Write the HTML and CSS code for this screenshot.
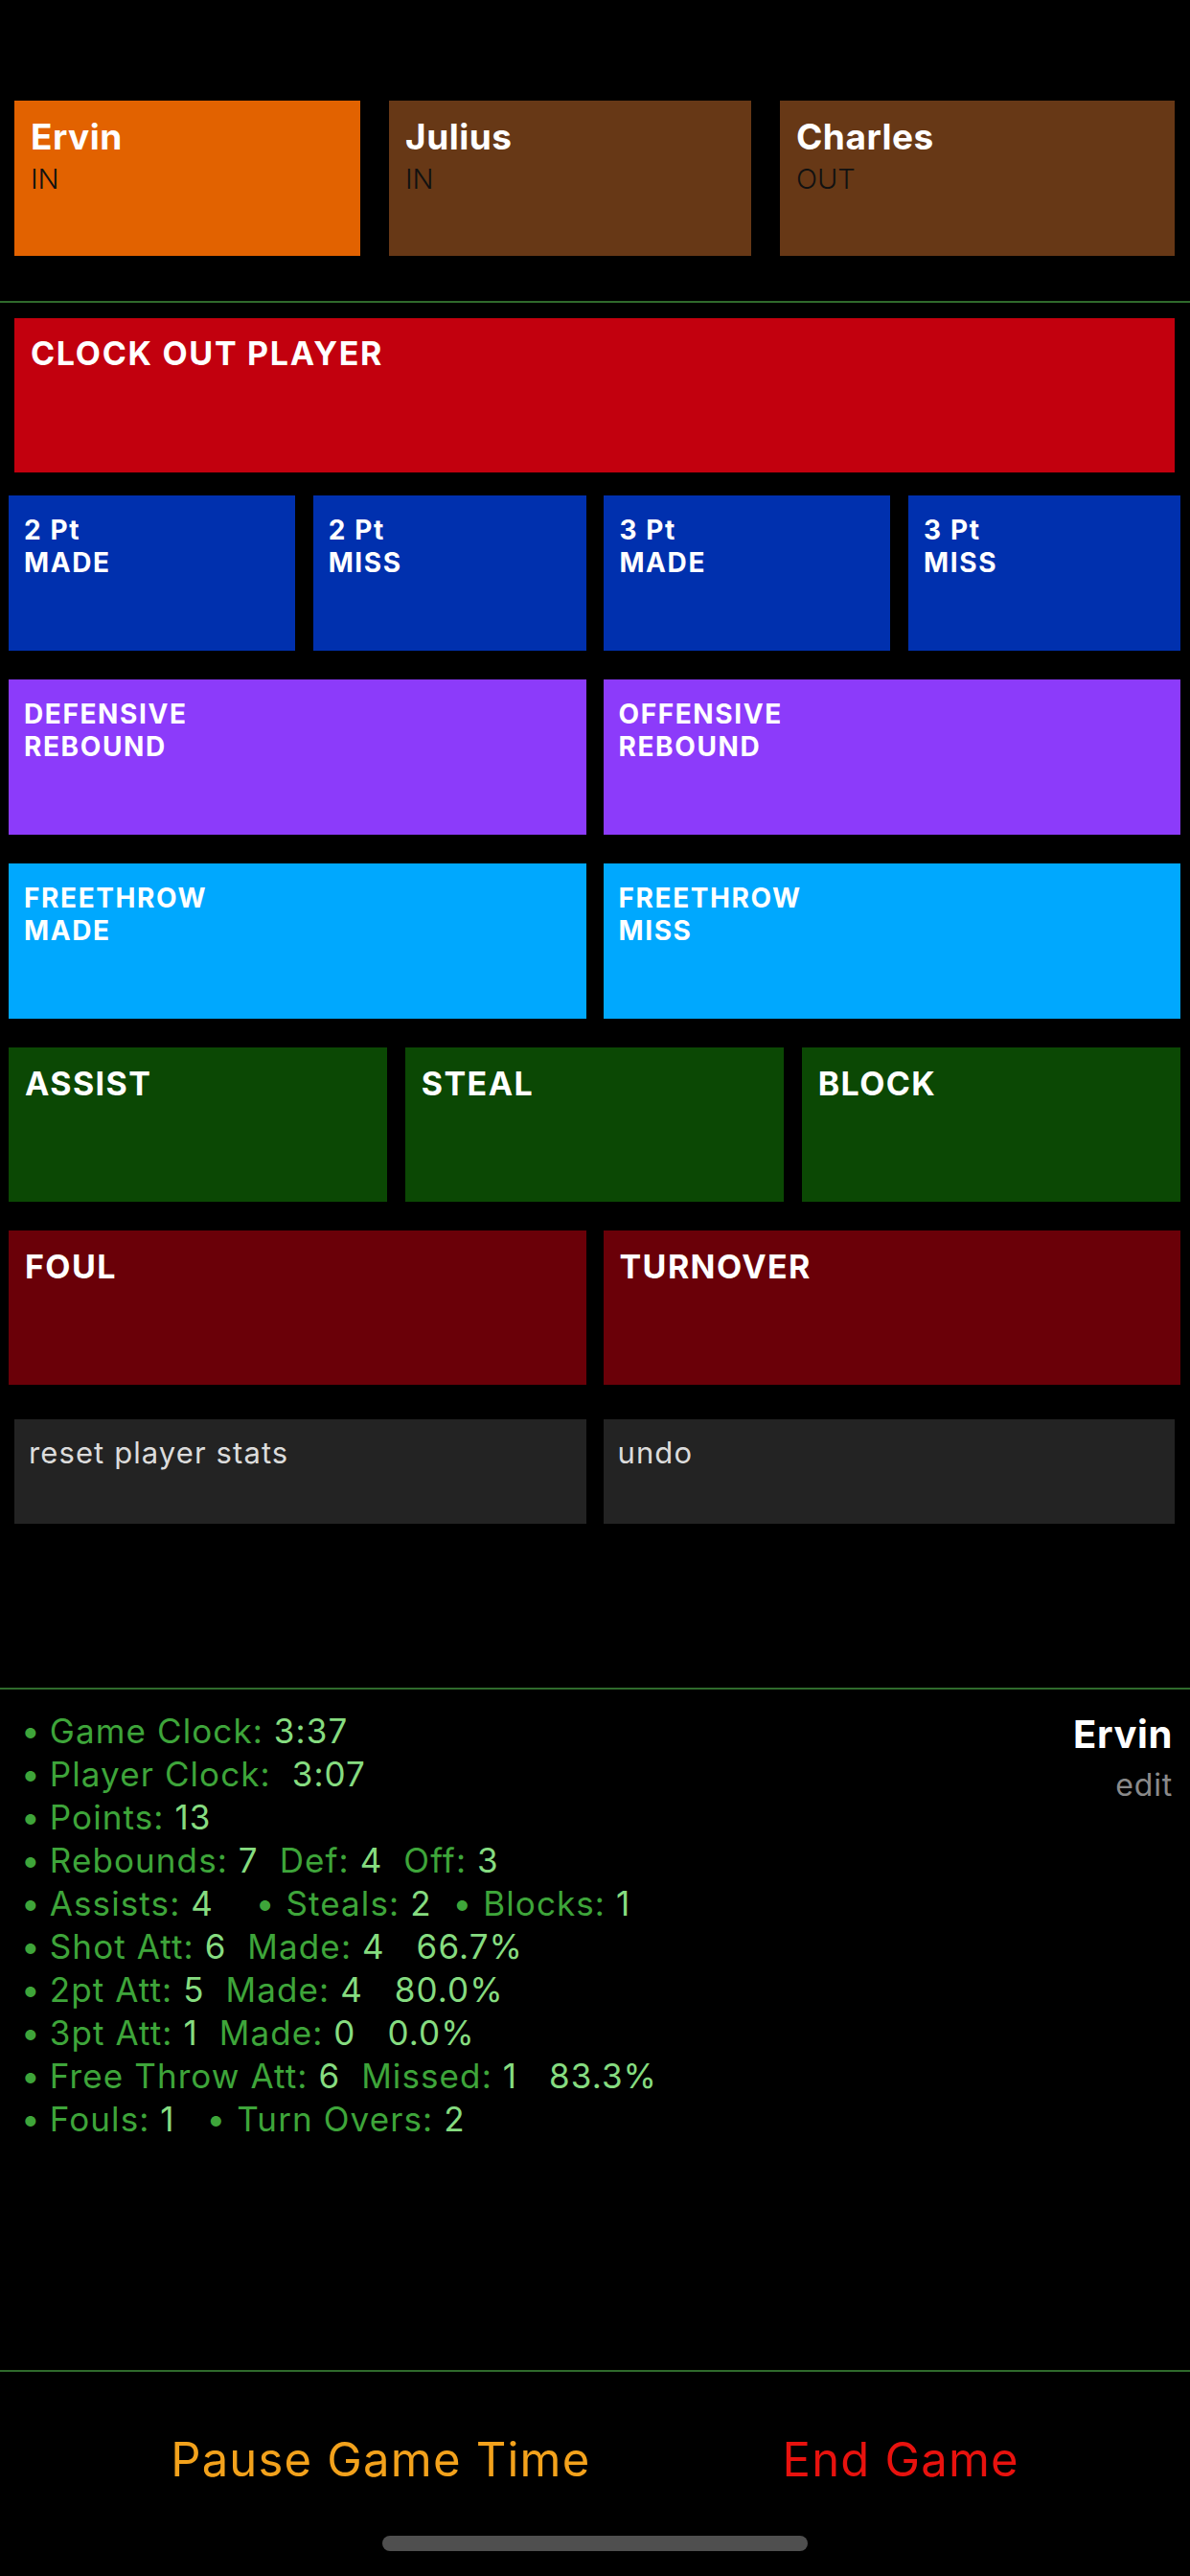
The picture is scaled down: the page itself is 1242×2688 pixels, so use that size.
FILE: index.html
```html
<!DOCTYPE html>
<html>
<head>
<meta charset="utf-8">
<link rel="stylesheet" href="styles.css">
</head>
<body>
<div class="screen">
  <div class="players">
    <div class="player player-active"><div class="pname">Ervin</div><div class="pstate">IN</div></div>
    <div class="player"><div class="pname">Julius</div><div class="pstate">IN</div></div>
    <div class="player"><div class="pname">Charles</div><div class="pstate">OUT</div></div>
  </div>
  <div class="divider div-top"></div>

  <div class="clockout"><div class="btn btn-lg red">CLOCK OUT PLAYER</div></div>

  <div class="row row4">
    <div class="btn btn-sm blue">2 Pt<br>MADE</div>
    <div class="btn btn-sm blue">2 Pt<br>MISS</div>
    <div class="btn btn-sm blue">3 Pt<br>MADE</div>
    <div class="btn btn-sm blue">3 Pt<br>MISS</div>
  </div>
  <div class="row row2">
    <div class="btn btn-sm purple">DEFENSIVE<br>REBOUND</div>
    <div class="btn btn-sm purple">OFFENSIVE<br>REBOUND</div>
  </div>
  <div class="row row2">
    <div class="btn btn-sm cyan">FREETHROW<br>MADE</div>
    <div class="btn btn-sm cyan">FREETHROW<br>MISS</div>
  </div>
  <div class="row row3">
    <div class="btn btn-lg green">ASSIST</div>
    <div class="btn btn-lg green">STEAL</div>
    <div class="btn btn-lg green">BLOCK</div>
  </div>
  <div class="row row2">
    <div class="btn btn-lg maroon">FOUL</div>
    <div class="btn btn-lg maroon">TURNOVER</div>
  </div>
  <div class="row row2 util">
    <div class="ubtn">reset player stats</div>
    <div class="ubtn">undo</div>
  </div>

  <div class="divider div-mid"></div>

  <div class="stats">
    <div class="stat-list">
      <div class="line"><span class="b">•</span>Game Clock: <span class="v">3:37</span></div>
      <div class="line"><span class="b">•</span>Player Clock:&nbsp; <span class="v">3:07</span></div>
      <div class="line"><span class="b">•</span>Points: <span class="v">13</span></div>
      <div class="line"><span class="b">•</span>Rebounds: <span class="v">7</span>&nbsp; Def: <span class="v">4</span>&nbsp; Off: <span class="v">3</span></div>
      <div class="line"><span class="b">•</span>Assists: <span class="v">4</span>&nbsp;&nbsp;&nbsp; • Steals: <span class="v">2</span>&nbsp; • Blocks: <span class="v">1</span></div>
      <div class="line"><span class="b">•</span>Shot Att: <span class="v">6</span>&nbsp; Made: <span class="v">4</span>&nbsp;&nbsp; <span class="v">66.7%</span></div>
      <div class="line"><span class="b">•</span>2pt Att: <span class="v">5</span>&nbsp; Made: <span class="v">4</span>&nbsp;&nbsp; <span class="v">80.0%</span></div>
      <div class="line"><span class="b">•</span>3pt Att: <span class="v">1</span>&nbsp; Made: <span class="v">0</span>&nbsp;&nbsp; <span class="v">0.0%</span></div>
      <div class="line"><span class="b">•</span>Free Throw Att: <span class="v">6</span>&nbsp; Missed: <span class="v">1</span>&nbsp;&nbsp; <span class="v">83.3%</span></div>
      <div class="line"><span class="b">•</span>Fouls: <span class="v">1</span>&nbsp;&nbsp; • Turn Overs: <span class="v">2</span></div>
    </div>
    <div class="who">
      <div class="who-name">Ervin</div>
      <div class="who-edit">edit</div>
    </div>
  </div>

  <div class="divider div-bot"></div>

  <div class="footer">
    <div class="fbtn pause">Pause Game Time</div>
    <div class="fbtn end">End Game</div>
  </div>
  <div class="home-wrap"><div class="home"></div></div>
</div>
</body>
</html>
```
FILE: styles.css
```css
* { box-sizing: border-box; }
html, body {
  margin: 0;
  padding: 0;
  background: #000;
}
body {
  font-family: Inter, "Open Sans", "Liberation Sans", sans-serif;
  color: #fff;
  width: 1242px;
  height: 2688px;
  overflow: hidden;
}
.screen {
  display: flex;
  flex-direction: column;
  height: 2688px;
}

/* players */
.players {
  display: grid;
  grid-template-columns: 361px 378px 412px;
  column-gap: 30px;
  padding: 105px 15px 0 15px;
}
.player {
  height: 162px;
  background: #673816;
  padding: 15px 17px;
}
.player-active { background: #e26200; }
.pname {
  font-size: 37px;
  font-weight: 700;
  color: #fff;
  line-height: 45px;
  letter-spacing: 0.5px;
}
.pstate {
  margin-top: 4px;
  font-size: 29px;
  font-weight: 300;
  color: #111;
  line-height: 35px;
}

.divider {
  height: 2px;
  background: #2f6a2c;
}
.div-top { margin-top: 47px; }
.div-mid { margin-top: 171px; }
.div-bot { margin-top: 3px; }

/* buttons */
.clockout {
  padding: 16px 16px 0 15px;
}
.btn {
  color: #fff;
  font-weight: 700;
}
.btn-lg {
  height: 161px;
  font-size: 34px;
  line-height: 41px;
  padding: 17px 17px;
  letter-spacing: 1.4px;
}
.clockout .btn-lg {
  font-size: 34px;
  line-height: 40px;
  padding: 17px 17px;
  letter-spacing: 1.7px;
}
.btn-sm {
  height: 162px;
  font-size: 28px;
  line-height: 34px;
  padding: 19px 16px;
  letter-spacing: 1.6px;
}
.row {
  display: grid;
  padding: 0 10px 0 9px;
  column-gap: 18px;
  margin-top: 30px;
}
.clockout + .row { margin-top: 24px; }
.row4 {
  grid-template-columns: 299px 285px 299px 284px;
  column-gap: 18.7px;
}
.row2 { grid-template-columns: 1fr 1fr; }
.row3 { grid-template-columns: 1fr 1fr 1fr; column-gap: 18.5px; }

.red { background: #c2000e; }
.blue { background: #0030ae; }
.purple { background: #8c3bfa; }
.cyan { background: #00a8fe; }
.green { background: #0b4804; }
.maroon { background: #6a0008; }

.util {
  padding: 0 16px 0 15px;
  margin-top: 36px;
}
.ubtn {
  height: 109px;
  background: #232323;
  color: #dcdcdc;
  font-size: 31px;
  font-weight: 400;
  line-height: 36px;
  padding: 17px 15px;
  letter-spacing: 1.1px;
}

/* stats */
.stats {
  display: flex;
  justify-content: space-between;
  padding: 21px 18px 0 22px;
  height: 707px;
}
.stat-list {
  color: #3ea53a;
  font-size: 35px;
  line-height: 45px;
  white-space: nowrap;
  letter-spacing: 1.1px;
}
.stat-list .b { margin-right: 9px; }
.stat-list .v { color: #86dc80; }
.who {
  text-align: right;
  padding-top: 2px;
}
.who-name {
  font-size: 40px;
  font-weight: 700;
  line-height: 47px;
  color: #fff;
  letter-spacing: 0.6px;
}
.who-edit {
  margin-top: 10px;
  font-size: 32px;
  line-height: 39px;
  color: #8a8a8a;
  letter-spacing: 0.8px;
}

/* footer */
.footer {
  display: flex;
  justify-content: center;
  column-gap: 200px;
  padding-top: 63px;
}
.fbtn {
  font-size: 49px;
  line-height: 58px;
  letter-spacing: 1.2px;
}
.pause { color: #f3a21c; }
.end { color: #e8120e; }

.home-wrap {
  display: flex;
  justify-content: center;
  padding-top: 50px;
}
.home {
  width: 444px;
  height: 16px;
  border-radius: 8px;
  background: #4f4f4f;
}
```
